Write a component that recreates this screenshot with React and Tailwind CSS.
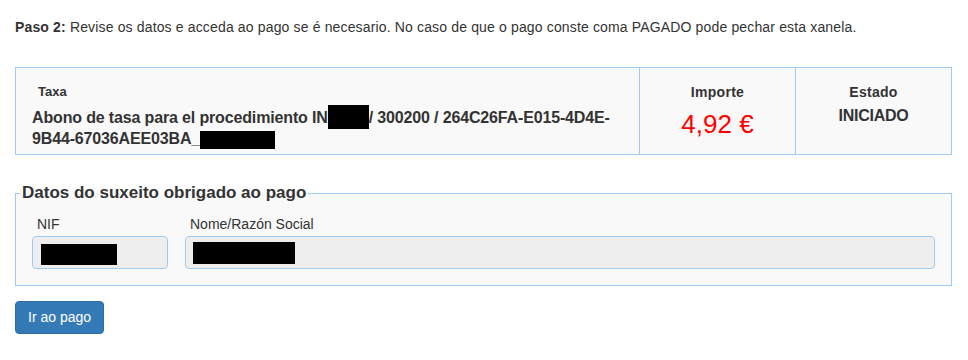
import React from 'react';

const Redacted = ({ className }) => (
  <span className={`inline-block bg-black align-middle ${className}`} />
);

const App = () => {
  return (
    <div className="min-h-[360px] bg-white px-[15px] pt-[18px] pr-[16px] font-['Liberation_Sans',Arial,sans-serif] text-[#333]">
      <p className="text-[14px] leading-[18px] tracking-[0.15px]">
        <b>Paso 2:</b> Revise os datos e acceda ao pago se é necesario. No caso de que o pago conste coma PAGADO pode pechar esta xanela.
      </p>

      <div className="mt-[31px] flex h-[88px] border border-[#9fcbf3] bg-[#f9f9f9]">
        <div className="flex-1 pl-[16px] pt-[16px]">
          <div className="ml-[6px] text-[13px] font-bold leading-[16px]">Taxa</div>
          <div className="mt-[8px] text-[16px] font-bold leading-[20px] tracking-[-0.15px]">
            Abono de tasa para el procedimiento IN
            <Redacted className="-mt-[3px] h-[24px] w-[41px]" />
            / 300200 / 264C26FA-E015-4D4E-
            <br />
            9B44-67036AEE03BA_
            <Redacted className="h-[18px] w-[75px]" />
          </div>
        </div>
        <div className="w-[156px] border-l border-[#9fcbf3] pt-[15px] text-center">
          <div className="text-[14px] font-bold leading-[18px] tracking-[0.3px]">Importe</div>
          <div className="mt-[8px] text-[26px] leading-[30px] text-[#ff0000]">4,92 €</div>
        </div>
        <div className="w-[156px] border-l border-[#9fcbf3] pt-[15px] text-center">
          <div className="text-[14px] font-bold leading-[18px] tracking-[0.3px]">Estado</div>
          <div className="mt-[5px] text-[16px] font-bold leading-[20px] tracking-[-0.25px]">INICIADO</div>
        </div>
      </div>

      <fieldset className="mt-[28px] border border-[#9fcbf3] bg-[#f9f9f9] px-[4px] pb-[16px] pt-[12px]">
        <legend className="px-[2px] text-[17px] font-bold leading-[20px]">Datos do suxeito obrigado ao pago</legend>
        <div className="flex gap-[17px] px-[12px]">
          <div className="w-[136px]">
            <label className="ml-[5px] block text-[14px] leading-[18px]">NIF</label>
            <div className="mt-[3px] h-[33px] rounded-[4px] border border-[#9fcbf3] bg-[#eeeeee] pl-[8px] pt-[5px]">
              <Redacted className="block h-[21px] w-[76px]" />
            </div>
          </div>
          <div className="flex-1">
            <label className="ml-[5px] block text-[14px] leading-[18px]">Nome/Razón Social</label>
            <div className="mt-[3px] h-[33px] rounded-[4px] border border-[#9fcbf3] bg-[#eeeeee] pl-[7px] pt-[3px]">
              <Redacted className="block h-[22px] w-[102px]" />
            </div>
          </div>
        </div>
      </fieldset>

      <button className="mt-[15px] h-[33px] rounded-[4px] border border-[#2e6da4] bg-[#337ab7] px-[12px] text-[14px] text-white">
        Ir ao pago
      </button>
    </div>
  );
};

export default App;
